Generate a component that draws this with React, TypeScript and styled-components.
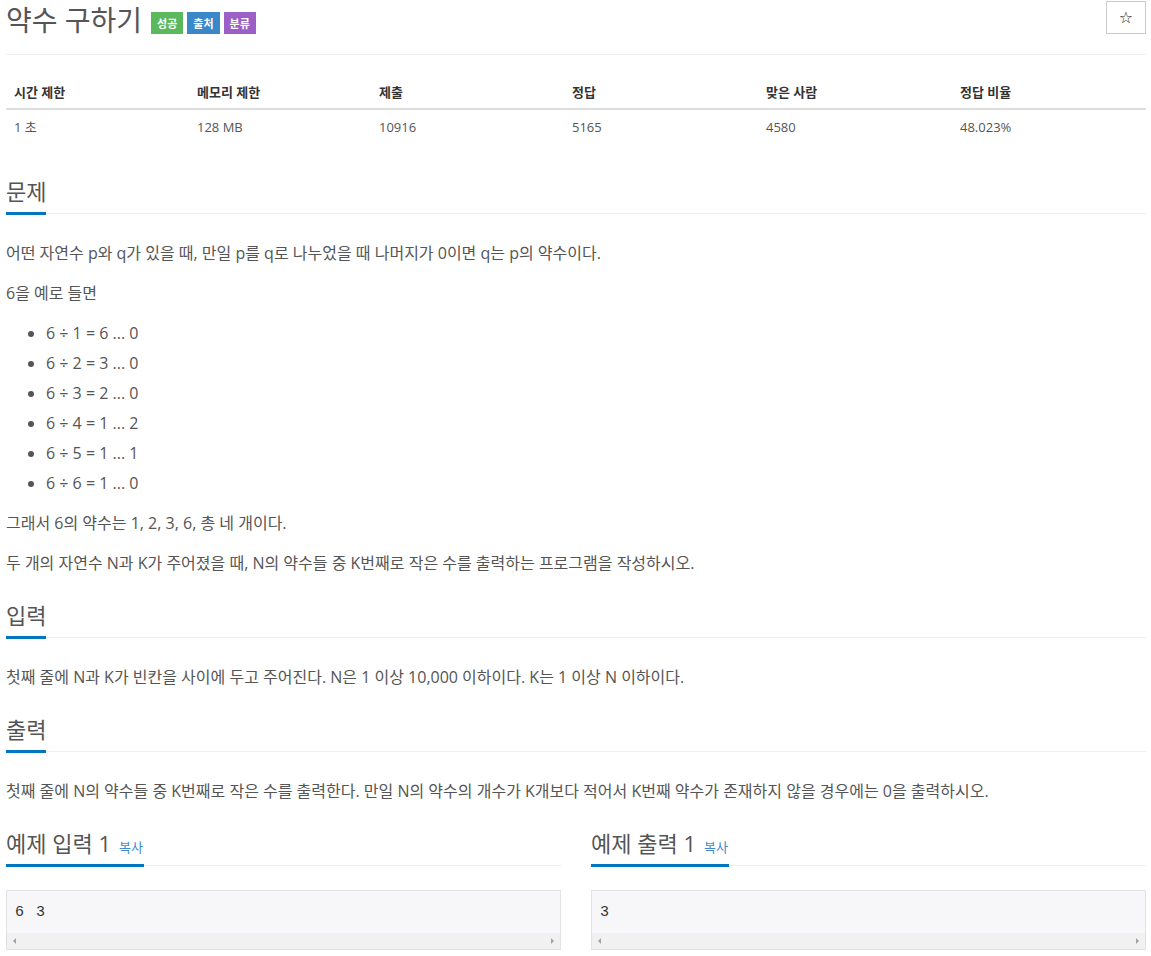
import React from 'react';
import styled, { createGlobalStyle } from 'styled-components';

const GlobalStyle = createGlobalStyle`
  body {
    margin: 0;
    background: #fff;
    font-family: "Open Sans", "Noto Sans CJK KR", sans-serif;
    color: #555;
  }
`;

const Page = styled.div`
  padding: 0 5px 0 6px;
`;

const TitleBar = styled.div`
  display: flex;
  align-items: flex-start;
  padding-bottom: 14px;
  border-bottom: 1px solid #eee;
`;

const Title = styled.h1`
  margin: 0;
  font-size: 28px;
  line-height: 40px;
  font-weight: 400;
  color: #555;
`;

const Labels = styled.div`
  display: flex;
  gap: 4px;
  margin: 12px 0 0 9px;
  flex: 1;
`;

const Label = styled.span<{ $bg: string }>`
  display: inline-flex;
  align-items: center;
  height: 22px;
  padding: 0 6px;
  background: ${({ $bg }) => $bg};
  color: #fff;
  font-size: 11px;
  font-weight: 700;
`;

const StarButton = styled.button`
  width: 40px;
  height: 33px;
  margin-top: 1px;
  border: 1px solid #ccc;
  background: #fff;
  color: #222;
  font-size: 16px;
  padding: 0;
  font-family: "DejaVu Sans", sans-serif;
`;

const InfoTable = styled.table`
  width: 100%;
  margin: 19px 0 19px;
  border-collapse: collapse;
  table-layout: fixed;
  font-size: 13px;
  th,
  td {
    text-align: left;
    line-height: 20px;
  }
  th {
    padding: 8px 8px 6px;
    font-weight: 700;
    color: #333;
    border-bottom: 2px solid #ddd;
  }
  td {
    padding: 7px 8px 8px;
    color: #555;
  }
`;

const Section = styled.section``;

const Head = styled.div`
  display: flex;
  padding-top: 12px;
  border-bottom: 1px solid #eee;
  margin-bottom: 24px;
`;

const HeadTitle = styled.h2`
  margin: 0 0 -2px;
  height: 30px;
  font-size: 22px;
  line-height: 30px;
  font-weight: 400;
  color: #555;
  padding-bottom: 6px;
  border-bottom: 3px solid #0076c0;
  display: flex;
  align-items: baseline;
`;

const CopyLink = styled.a`
  font-size: 13px;
  line-height: 16px;
  color: #428bca;
  margin-left: 8px;
  padding-right: 1px;
  text-decoration: none;
`;

const Para = styled.p`
  margin: 0 0 10px;
  font-size: 16px;
  line-height: 30px;
`;

const List = styled.ul`
  margin: 0 0 10px;
  padding-left: 40px;
  font-size: 16px;
  line-height: 30px;
`;

const Samples = styled.div`
  display: grid;
  grid-template-columns: 1fr 1fr;
  gap: 30px;
`;

const SampleBox = styled.div`
  margin-top: 1px;
  border: 1px solid #e1e1e8;
  background: #f7f7f9;
`;

const SampleText = styled.pre`
  margin: 0;
  padding: 12px 8px 0;
  line-height: 20px;
  height: 30px;
  font-family: "Liberation Mono", monospace;
  font-size: 15px;
  letter-spacing: 1.5px;
  color: #333;
`;

const ScrollStrip = styled.div`
  height: 16px;
  background: #f1f1f1;
  display: flex;
  justify-content: space-between;
  align-items: center;
  padding: 0 6px;
`;

const Arrow = styled.span<{ $dir: 'left' | 'right' }>`
  width: 0;
  height: 0;
  border-top: 3px solid transparent;
  border-bottom: 3px solid transparent;
  ${({ $dir }) =>
    $dir === 'left' ? 'border-right: 3px solid #a3a3a3;' : 'border-left: 3px solid #a3a3a3;'}
`;

// column widths are content widths (cell padding 8px each side)
const stats = [
  ['시간 제한', '1 초', '167px'],
  ['메모리 제한', '128 MB', '166px'],
  ['제출', '10916', '177px'],
  ['정답', '5165', '178px'],
  ['맞은 사람', '4580', '178px'],
  ['정답 비율', '48.023%', 'auto'],
];

const divisions = ['6 ÷ 1 = 6 ... 0', '6 ÷ 2 = 3 ... 0', '6 ÷ 3 = 2 ... 0', '6 ÷ 4 = 1 ... 2', '6 ÷ 5 = 1 ... 1', '6 ÷ 6 = 1 ... 0'];

const Sample = ({ title, value }: { title: string; value: string }) => (
  <div>
    <Head>
      <HeadTitle>
        {title}
        <CopyLink href="#">복사</CopyLink>
      </HeadTitle>
    </Head>
    <SampleBox>
      <SampleText>{value}</SampleText>
      <ScrollStrip>
        <Arrow $dir="left" />
        <Arrow $dir="right" />
      </ScrollStrip>
    </SampleBox>
  </div>
);

export default function App() {
  return (
    <Page>
      <GlobalStyle />
      <TitleBar>
        <Title>약수 구하기</Title>
        <Labels>
          <Label $bg="#5cb85c">성공</Label>
          <Label $bg="#3a87c9">출처</Label>
          <Label $bg="#9b5fc6">분류</Label>
        </Labels>
        <StarButton>☆</StarButton>
      </TitleBar>

      <InfoTable>
        <thead>
          <tr>
            {stats.map(([h, , w]) => (
              <th key={h} style={{ width: w }}>
                {h}
              </th>
            ))}
          </tr>
        </thead>
        <tbody>
          <tr>
            {stats.map(([h, v]) => (
              <td key={h}>{v}</td>
            ))}
          </tr>
        </tbody>
      </InfoTable>

      <Section>
        <Head>
          <HeadTitle>문제</HeadTitle>
        </Head>
        <Para>어떤 자연수 p와 q가 있을 때, 만일 p를 q로 나누었을 때 나머지가 0이면 q는 p의 약수이다.</Para>
        <Para>6을 예로 들면</Para>
        <List>
          {divisions.map((d) => (
            <li key={d}>{d}</li>
          ))}
        </List>
        <Para>그래서 6의 약수는 1, 2, 3, 6, 총 네 개이다.</Para>
        <Para>두 개의 자연수 N과 K가 주어졌을 때, N의 약수들 중 K번째로 작은 수를 출력하는 프로그램을 작성하시오.</Para>
      </Section>

      <Section>
        <Head>
          <HeadTitle>입력</HeadTitle>
        </Head>
        <Para>첫째 줄에 N과 K가 빈칸을 사이에 두고 주어진다. N은 1 이상 10,000 이하이다. K는 1 이상 N 이하이다.</Para>
      </Section>

      <Section>
        <Head>
          <HeadTitle>출력</HeadTitle>
        </Head>
        <Para>첫째 줄에 N의 약수들 중 K번째로 작은 수를 출력한다. 만일 N의 약수의 개수가 K개보다 적어서 K번째 약수가 존재하지 않을 경우에는 0을 출력하시오.</Para>
      </Section>

      <Samples>
        <Sample title="예제 입력 1" value="6 3" />
        <Sample title="예제 출력 1" value="3" />
      </Samples>
    </Page>
  );
}
